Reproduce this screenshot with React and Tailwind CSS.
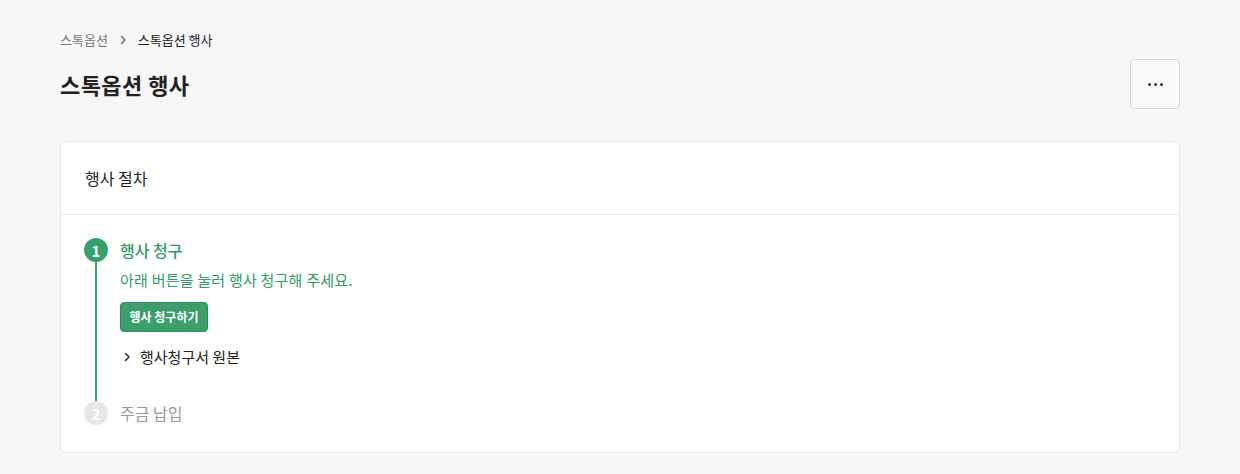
import React from "react";

const font = { fontFamily: '"Noto Sans CJK KR", "Noto Sans", sans-serif' };

function Chevron({ className }) {
  return (
    <svg viewBox="0 0 10 10" className={className} fill="none" stroke="currentColor" strokeWidth="1.6" strokeLinecap="round" strokeLinejoin="round">
      <path d="M3.5 1.5 L7 5 L3.5 8.5" />
    </svg>
  );
}

export default function App() {
  return (
    <div className="min-h-[474px] bg-[#f7f7f7] px-[60px] pt-[30px] pb-[21px]" style={font}>
      <div className="flex items-center h-[20px] text-[13px] leading-[20px]">
        <span className="text-[#777777]">스톡옵션</span>
        <Chevron className="w-[10px] h-[10px] mx-[10px] text-[#777777]" />
        <span className="text-[#222222]">스톡옵션 행사</span>
      </div>
      <div className="mt-[9px] flex items-center justify-between h-[50px]">
        <h1 className="text-[22px] leading-[30px] font-bold text-[#222222] tracking-[0.02em]">스톡옵션 행사</h1>
        <button className="w-[50px] h-[50px] rounded-[4px] border border-[#d6d6d6] bg-[#fafafa] flex items-center justify-center gap-[3px]">
          <span className="w-[3px] h-[3px] rounded-full bg-[#333]" />
          <span className="w-[3px] h-[3px] rounded-full bg-[#333]" />
          <span className="w-[3px] h-[3px] rounded-full bg-[#333]" />
        </button>
      </div>
      <div className="mt-[32px] bg-white border border-[#e6e6e6] rounded-[6px]">
        <div className="h-[73px] flex items-center px-[24px] border-b border-[#e6e6e6]">
          <span className="text-[16px] text-[#222222]">행사 절차</span>
        </div>
        <div className="pt-[23px] pl-[23px] pb-[27px]">
          <div className="grid grid-cols-[24px_1fr] gap-x-[12px]">
            <div className="flex flex-col items-center">
              <div className="w-[24px] h-[24px] rounded-full bg-[#35a06b] text-white text-[15px] font-bold flex items-center justify-center leading-none">1</div>
              <div className="w-[2px] flex-1 bg-[#35a06b]" />
            </div>
            <div className="pb-[33px]">
              <div className="text-[16px] leading-[24px] font-medium text-[#2e9c66]">행사 청구</div>
              <div className="mt-[7px] text-[15px] leading-[22px] text-[#2e9c66] tracking-[0.015em]">아래 버튼을 눌러 행사 청구해 주세요.</div>
              <button className="mt-[11px] h-[30px] w-[88px] rounded-[4px] bg-[#3a9f6b] border border-[#2f8f5d] text-white text-[12px] font-bold">행사 청구하기</button>
              <div className="mt-[14px] flex items-center h-[22px] text-[15px] text-[#222222]">
                <Chevron className="w-[10px] h-[10px] ml-[2px] mr-[8px] text-[#333]" />
                <span>행사청구서 원본</span>
              </div>
            </div>
            <div className="w-[24px] h-[24px] rounded-full bg-[#e6e6e6] text-white text-[15px] font-bold flex items-center justify-center leading-none">2</div>
            <div className="text-[16px] leading-[24px] text-[#999999]">주금 납입</div>
          </div>
        </div>
      </div>
    </div>
  );
}
